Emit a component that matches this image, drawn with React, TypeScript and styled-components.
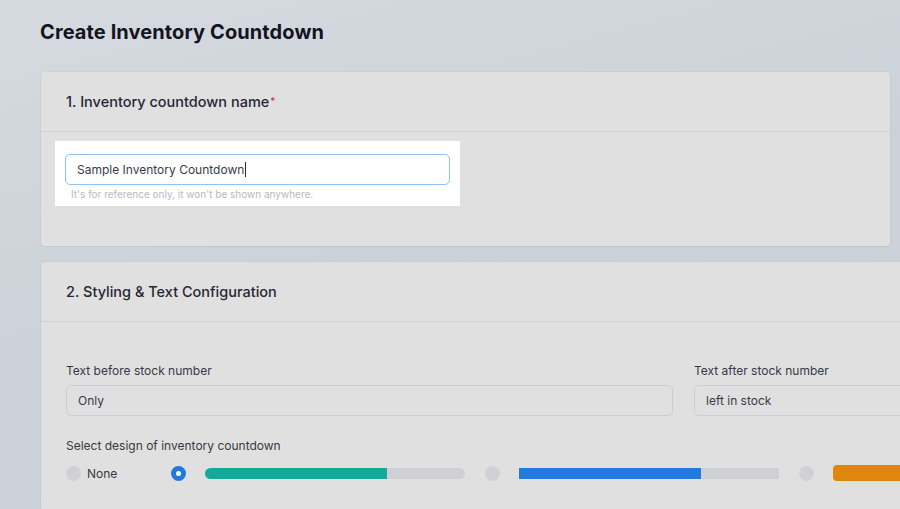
import styled, { createGlobalStyle } from "styled-components";

const GlobalStyle = createGlobalStyle`
  html, body {
    margin: 0;
    padding: 0;
    overflow: hidden;
  }
  body {
    font-family: "Inter", "Open Sans", sans-serif;
    background: linear-gradient(165deg, #d5dadf 0%, #cbd2d9 45%, #c9d0d8 100%);
    min-height: 509px;
    color: #2b2b38;
  }
`;

const Page = styled.div`
  padding: 19px 0 40px 40px;
  width: 1100px;
`;

const Title = styled.h1`
  margin: 0 0 26px;
  font-size: 20px;
  line-height: 27px;
  font-weight: 700;
  color: #14141f;
  letter-spacing: 0.1px;
`;

const Card = styled.section<{ $width: number }>`
  width: ${(p) => p.$width}px;
  margin-left: 1px;
  margin-bottom: 16px;
  background: #e0e0e0;
  border-radius: 4px;
  box-shadow: 0 0 0 1px rgba(0, 0, 0, 0.025), 0 1px 2px rgba(0, 0, 0, 0.04);
`;

const CardHeader = styled.div`
  height: 59px;
  display: flex;
  align-items: center;
  padding: 0 25px;
  border-bottom: 1px solid #d2d2d5;
  font-size: 14.5px;
  font-weight: 450;
  color: #272734;
`;

const Required = styled.span`
  color: #e0323c;
  font-size: 10px;
  margin-left: 1px;
  align-self: flex-start;
  margin-top: 23px;
`;

const CardBody = styled.div<{ $pad: string }>`
  padding: ${(p) => p.$pad};
`;

const WhiteBox = styled.div`
  width: 385px;
  background: #ffffff;
  padding: 13px 10px 4px;
`;

const FocusField = styled.div`
  height: 31px;
  box-sizing: border-box;
  border: 1px solid #8fc3f3;
  border-radius: 5px;
  display: flex;
  align-items: center;
  padding: 0 11px;
  font-size: 12px;
  color: #3a3a48;
`;

const Caret = styled.span`
  display: inline-block;
  width: 1px;
  height: 15px;
  background: #2a2a35;
  margin-left: 1px;
`;

const Hint = styled.div`
  font-size: 10px;
  line-height: 15px;
  color: #b8b8c1;
  padding: 2px 0 0 6px;
`;

const FieldGrid = styled.div`
  display: grid;
  grid-template-columns: 607px 1fr;
  column-gap: 21px;
`;

const Field = styled.div`
  display: flex;
  flex-direction: column;
`;

const Label = styled.div`
  font-size: 12px;
  line-height: 16px;
  color: #383845;
  margin-bottom: 6px;
`;

const TextBox = styled.div`
  height: 31px;
  box-sizing: border-box;
  border: 1px solid #cdcdd3;
  border-radius: 5px;
  display: flex;
  align-items: center;
  padding: 0 11px;
  font-size: 12px;
  color: #3a3a48;
`;

const DesignLabel = styled(Label)`
  margin-top: 22px;
  margin-bottom: 11px;
`;

const Designs = styled.div`
  display: flex;
  align-items: center;
  gap: 20px;
`;

const Option = styled.div<{ $width?: number }>`
  display: flex;
  align-items: center;
  gap: 19px;
  ${(p) => (p.$width ? `width: ${p.$width}px;` : "")}
  flex-shrink: 0;
`;

const NoneOption = styled(Option)`
  gap: 6px;
  font-size: 12px;
  color: #383845;
`;

const Radio = styled.span<{ $checked?: boolean }>`
  width: 15px;
  height: 15px;
  border-radius: 50%;
  flex-shrink: 0;
  background: ${(p) => (p.$checked ? "#1f79df" : "#d0d1d7")};
  display: flex;
  align-items: center;
  justify-content: center;
  &::after {
    content: "";
    display: ${(p) => (p.$checked ? "block" : "none")};
    width: 5px;
    height: 5px;
    border-radius: 50%;
    background: #ffffff;
  }
`;

const Track = styled.div<{ $height: number; $radius: number }>`
  width: 260px;
  height: ${(p) => p.$height}px;
  border-radius: ${(p) => p.$radius}px;
  background: #cfd0d6;
  overflow: hidden;
`;

const Fill = styled.div<{ $color: string }>`
  height: 100%;
  background: ${(p) => p.$color};
`;

const designs = [
  { color: "#16a89a", height: 11, radius: 6, pct: 70, checked: true },
  { color: "#227bdc", height: 11, radius: 0, pct: 70, checked: false },
  { color: "#df860e", height: 16, radius: 4, pct: 100, checked: false },
];

export default function App() {
  return (
    <>
      <GlobalStyle />
      <Page>
        <Title>Create Inventory Countdown</Title>

        <Card $width={849}>
          <CardHeader>
            1. Inventory countdown name<Required>*</Required>
          </CardHeader>
          <CardBody $pad="9px 14px 40px">
            <WhiteBox>
              <FocusField>
                Sample Inventory Countdown
                <Caret />
              </FocusField>
              <Hint>It's for reference only, it won't be shown anywhere.</Hint>
            </WhiteBox>
          </CardBody>
        </Card>

        <Card $width={1000}>
          <CardHeader>2. Styling &amp; Text Configuration</CardHeader>
          <CardBody $pad="41px 25px 30px">
            <FieldGrid>
              <Field>
                <Label>Text before stock number</Label>
                <TextBox>Only</TextBox>
              </Field>
              <Field>
                <Label>Text after stock number</Label>
                <TextBox>left in stock</TextBox>
              </Field>
            </FieldGrid>

            <DesignLabel>Select design of inventory countdown</DesignLabel>
            <Designs>
              <NoneOption $width={85}>
                <Radio />
                None
              </NoneOption>
              {designs.map((d, i) => (
                <Option key={i}>
                  <Radio $checked={d.checked} />
                  <Track $height={d.height} $radius={d.radius}>
                    <Fill $color={d.color} style={{ width: `${d.pct}%` }} />
                  </Track>
                </Option>
              ))}
            </Designs>
          </CardBody>
        </Card>
      </Page>
    </>
  );
}
